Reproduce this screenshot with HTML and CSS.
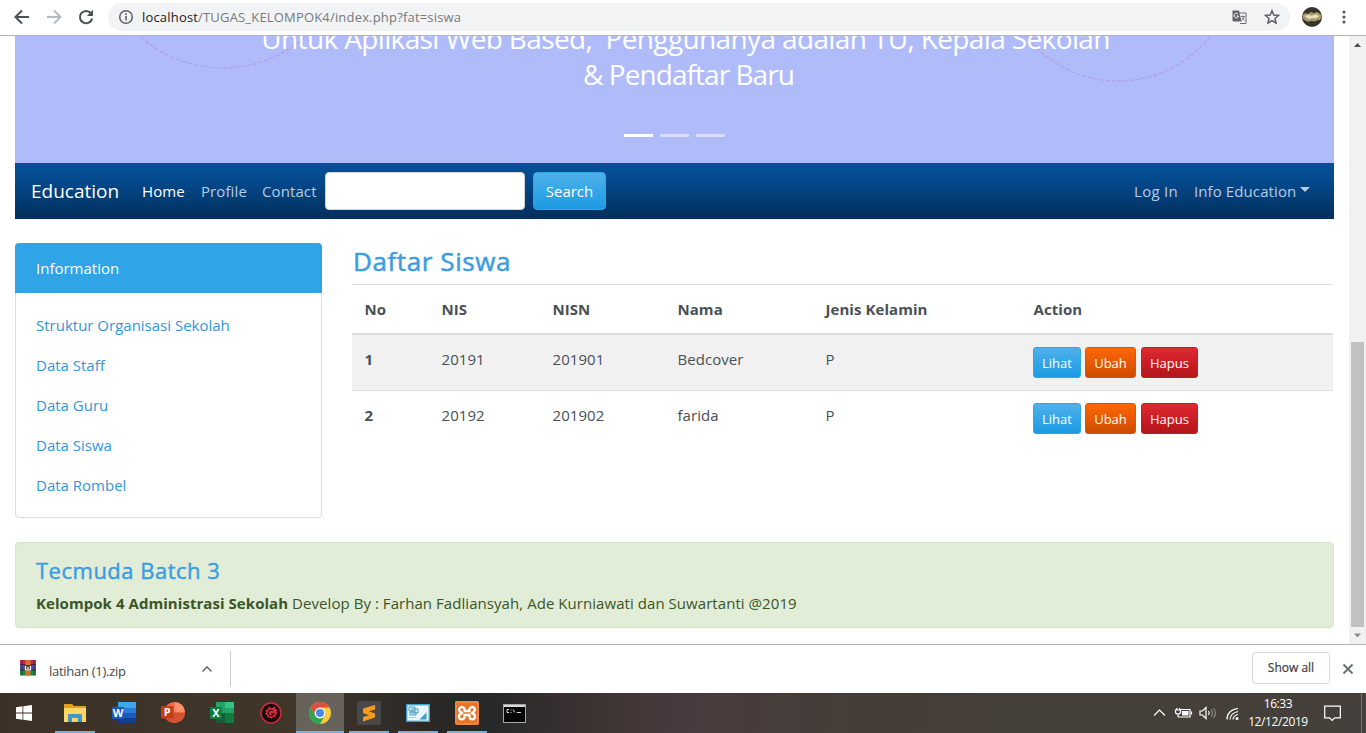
FILE: index.html
```html
<!DOCTYPE html>
<html lang="id">
<head>
<meta charset="utf-8">
<title>Education</title>
<link rel="stylesheet" href="styles.css">
</head>
<body>
<div class="screen">
  <header class="toolbar">
    <svg class="nav-icons" width="100" height="34" viewBox="0 0 100 34" fill="none" stroke-width="2">
      <path d="M29 17H16.500M22 10.500L15.500 17l6.500 6.500" stroke="#4c4f53"/>
      <path d="M47 17h12.500M54 10.500l6.500 6.500-6.500 6.500" stroke="#b9bbbe"/>
      <path d="M91 13.200A6.200 6.200 0 1 0 92.200 18.500" stroke="#4c4f53"/>
      <path d="M93 9.800v6.200h-6.200z" fill="#4c4f53"/>
    </svg>
    <div class="omnibox">
      <svg width="16" height="16" viewBox="0 0 16 16"><circle cx="8" cy="8" r="6.300" fill="none" stroke="#5f6368" stroke-width="1.500"/><path d="M7.200 7h1.600v4.500H7.200zM7.200 4.300h1.600v1.600H7.200z" fill="#5f6368"/></svg>
      <span class="url"><b>localhost</b>/TUGAS_KELOMPOK4/index.php?fat=siswa</span>
      <svg class="translate" width="15" height="15" viewBox="0 0 15 15"><path d="M6 3h8v10.500H8" fill="#f1f3f4" stroke="#6b6e72"/><path d="M0.500 0.500h6.500l2.500 11h-8a1 1 0 0 1-1-1z" fill="#5f6368"/><path d="M6.200 4.200A2.300 2.300 0 1 0 6.600 6H4.600" fill="none" stroke="#fff"/><path d="M9 6.500h4M11 5.500v1M12.300 6.500c-.5 2-1.500 3-2.800 4M10 7.500c.8 1.500 1.600 2.200 2.600 3" fill="none" stroke="#6b6e72" stroke-width=".9"/></svg>
      <svg width="16" height="16" viewBox="0 0 16 16"><path d="M8 1.700l1.800 4.300 4.700.4-3.500 3.100 1.050 4.500L8 11.600 3.950 14 5 9.500 1.500 6.400 6.200 6z" fill="none" stroke="#55585c" stroke-width="1.400"/></svg>
    </div>
    <svg class="avatar" width="20" height="20" viewBox="0 0 20 20"><circle cx="10" cy="10" r="10" fill="#35332c"/><path d="M.5 8l3-2 2.300 1 3-2 3 1.200 3-1.200 3.700 2 1.200 3-1.700 3-3 .2-2 1.300-4-.6-3 .8-3-1.200-2-2z" fill="#a99a68"/><path d="M2.500 9l4-1.300 3 1 4-1.500 4 1.800-3.500 2.500-4-.5-3 1.200z" fill="#e5dfbd"/></svg>
    <svg width="4" height="16" viewBox="0 0 4 16" fill="#55585c"><circle cx="2" cy="3" r="1.600"/><circle cx="2" cy="8" r="1.600"/><circle cx="2" cy="13" r="1.600"/></svg>
  </header>

  <div class="viewport">
    <main class="page">
      <section class="banner">
        <svg class="rings" width="1319" height="127" viewBox="15 36 1319 127" fill="none" stroke="#b39de9" stroke-width="1.200" stroke-dasharray="4 2"><circle cx="223" cy="-57" r="125"/><circle cx="1118" cy="-36" r="117"/></svg>
        <p class="caption"><span class="cap-one">Untuk Aplikasi Web Based,&nbsp; Penggunanya adalah TU, Kepala Sekolah</span><span class="cap-two">&amp; Pendaftar Baru</span></p>
        <div class="indicators"><i class="on"></i><i></i><i></i></div>
      </section>

      <nav class="navbar">
        <a class="brand">Education</a>
        <a class="link active">Home</a>
        <a class="link">Profile</a>
        <a class="link contact">Contact</a>
        <input class="field" aria-label="Search">
        <button class="btn search">Search</button>
        <a class="link login">Log In</a>
        <a class="link info">Info Education</a><i class="caret"></i>
      </nav>

      <div class="columns">
        <aside class="card">
          <div class="card-head">Information</div>
          <ul class="menu">
            <li>Struktur Organisasi Sekolah</li>
            <li>Data Staff</li>
            <li>Data Guru</li>
            <li>Data Siswa</li>
            <li>Data Rombel</li>
          </ul>
        </aside>
        <section class="content">
          <h2 class="title">Daftar Siswa</h2>
          <table class="table">
            <colgroup><col class="c1"><col class="c2"><col class="c3"><col class="c4"><col class="c5"><col></colgroup>
            <thead><tr><th>No</th><th>NIS</th><th>NISN</th><th>Nama</th><th>Jenis Kelamin</th><th>Action</th></tr></thead>
            <tbody>
              <tr class="odd"><th>1</th><td>20191</td><td>201901</td><td>Bedcover</td><td>P</td><td><div class="actions"><button class="btn sm lihat">Lihat</button><button class="btn sm ubah">Ubah</button><button class="btn sm hapus">Hapus</button></div></td></tr>
              <tr><th>2</th><td>20192</td><td>201902</td><td>farida</td><td>P</td><td><div class="actions"><button class="btn sm lihat">Lihat</button><button class="btn sm ubah">Ubah</button><button class="btn sm hapus">Hapus</button></div></td></tr>
            </tbody>
          </table>
        </section>
      </div>

      <footer class="notice">
        <h4 class="notice-title">Tecmuda Batch 3</h4>
        <p class="notice-text"><strong>Kelompok 4 Administrasi Sekolah</strong> <span>Develop By : Farhan Fadliansyah, Ade Kurniawati dan Suwartanti @2019</span></p>
      </footer>
    </main>
    <div class="scrollbar">
      <svg width="17" height="17" viewBox="0 0 17 17"><path d="M5 11l3.500-4 3.500 4z" fill="#505050"/></svg>
      <div class="thumb"></div>
      <svg width="17" height="17" viewBox="0 0 17 17"><path d="M5 6.500l3.500 4 3.500-4z" fill="#8a8a8a"/></svg>
    </div>
  </div>

  <div class="downloads">
    <svg class="rar" width="16" height="16" viewBox="0 0 16 16"><path d="M0 0h16v5H0z" fill="#c32a45"/><path d="M0 5h16v5H0z" fill="#4a4fae"/><path d="M0 10h16v5.500H0z" fill="#158a3c"/><path d="M0 4.500h16M0 10h16" stroke="#222" stroke-width=".8"/><path d="M2 0v15.500M14 0v15.500" stroke="#402a3b" stroke-width=".7"/><path d="M5.500 0h5v15.500h-5z" fill="#d8702a"/><path d="M4.500 5h7v6h-7z" fill="#553e30"/><path d="M5.500 6v4h5V6M8 7v3" fill="none" stroke="#fff" stroke-width="1.200"/></svg>
    <span class="filename">latihan (1).zip</span>
    <svg class="chev" width="12" height="8" viewBox="0 0 12 8"><path d="M1.500 6.500L6 2l4.500 4.500" fill="none" stroke="#6f7276" stroke-width="1.600"/></svg>
    <i class="divider"></i>
    <button class="showall">Show all</button>
    <svg width="12" height="12" viewBox="0 0 12 12"><path d="M1.500 1.500l9 9M10.500 1.500l-9 9" stroke="#6a6d71" stroke-width="1.800"/></svg>
  </div>

  <div class="taskbar">
    <div class="task start"><svg width="16" height="16" viewBox="0 0 16 16" fill="#fff"><path d="M0 2.200l6.500-.9v6.300H0zM7.300 1.200L16 0v7.600H7.300zM0 8.400h6.500v6.300L0 13.800zM7.300 8.400H16V16l-8.700-1.200z"/></svg></div>
    <div class="task running explorer"><svg width="22" height="20" viewBox="0 0 22 20"><path d="M0 1h8l2 2h12v16H0z" fill="#e2a11d"/><path d="M0 5h22v14H0z" fill="#fbd667"/><path d="M4 12q0-1 1-1h12q1 0 1 1v7h-4v-4H8v4H4z" fill="#4096cf"/></svg></div>
    <div class="task"><svg width="24" height="22" viewBox="0 0 24 22"><rect x="6" width="18" height="21" rx="1" fill="#2b7cd3"/><path d="M6 0h18v6H6z" fill="#41a5ee"/><path d="M6 11h18v5H6z" fill="#185abd"/><path d="M6 16h18v5H6z" fill="#103f91"/><rect y="5" width="12" height="12" rx="1" fill="#185abd"/><text x="6" y="14.500" class="glyph">W</text></svg></div>
    <div class="task"><svg width="24" height="22" viewBox="0 0 24 22"><circle cx="13.500" cy="10.500" r="10.500" fill="#ed6c47"/><path d="M13.500 0A10.500 10.500 0 0 1 24 10.500H13.500z" fill="#ff8f6b"/><path d="M3 10.500h21a10.500 10.500 0 0 1-21 0" fill="#d35230"/><rect y="4" width="12.500" height="12.500" rx="1" fill="#c43e1c"/><text x="6.200" y="14" class="glyph">P</text></svg></div>
    <div class="task"><svg width="24" height="22" viewBox="0 0 24 22"><rect x="6" width="18" height="21" rx="1" fill="#21a366"/><path d="M15 0h9v6h-9z" fill="#33c481"/><path d="M6 11h9v10H6z" fill="#185c37"/><path d="M15 11h9v10h-9z" fill="#107c41"/><rect y="5" width="12" height="12" rx="1" fill="#107c41"/><text x="6" y="14.500" class="glyph">X</text></svg></div>
    <div class="task"><svg width="22" height="22" viewBox="0 0 22 22"><circle cx="11" cy="11" r="10" fill="#17080a" stroke="#d22a3e" stroke-width="1.500"/><path d="M10 5l1 1.200L15.500 4.500l-.2 2.500 2.200.8-1.200 2 1.200 2-2 1v2l-2.300.2-1.700 1.800-1.700-1.500-2.300.2-.2-2.300L4.800 12l1.500-1.800L5 8l2.400-.2L8 5.700z" fill="#d22d40"/><path d="M13 8.500L9.800 8 8 10.800l1.500 2.700 3 .2 1.300-2.200H11" fill="none" stroke="#17080a" stroke-width="1.100"/></svg></div>
    <div class="task current"><svg width="22" height="22" viewBox="0 0 22 22"><circle cx="11" cy="11" r="11" fill="#f9cb3f"/><path d="M1.470 5.500A11 11 0 0 1 20.530 5.500H11a5.500 5.500 0 0 0-4.760 8.250z" fill="#de4b3f"/><path d="M1.470 5.500A11 11 0 0 0 11 22l4.760-8.250A5.500 5.500 0 0 1 6.240 13.750z" fill="#2ba552"/><circle cx="11" cy="11" r="5.200" fill="#fff"/><circle cx="11" cy="11" r="4" fill="#4b86ed"/></svg></div>
    <div class="task running"><svg width="24" height="24" viewBox="0 0 24 24"><rect width="24" height="24" rx="2" fill="#484848"/><path d="M6 7.500L18 4v4.500l-6 1.800 6 2.200v4L6 20.500V16l6-1.800-6-2.200z" fill="#f79a1c"/></svg></div>
    <div class="task running"><svg width="24" height="18" viewBox="0 0 24 18"><rect x=".7" y=".7" width="22.600" height="16.600" fill="#e9f5fb" stroke="#3ea2cf" stroke-width="1.400"/><path d="M3 3h6v4H3zM6 5h6v4H6zM4 8h6v3H4z" fill="#d5edf8" stroke="#4196be" stroke-width=".9"/><path d="M13.500 15.500l7-7v7z" fill="#3a9fbd"/><path d="M3 13.500h7" stroke="#a5cfdf"/></svg></div>
    <div class="task running"><svg width="24" height="24" viewBox="0 0 24 24"><rect width="24" height="24" rx="2" fill="#e87527"/><rect x="1" y="1" width="22" height="22" fill="none" stroke="#f3a064" stroke-width=".8"/><path d="M9.500 10V8A2.700 2.700 0 1 0 6 11.200L7.300 12 6 12.800A2.800 2.800 0 1 0 9.500 16v-2h5v2A2.800 2.800 0 1 0 18 12.800L16.700 12l1.300-.8A2.700 2.700 0 1 0 14.500 8v2z" fill="none" stroke="#fff" stroke-width="2.300" stroke-linejoin="round"/></svg></div>
    <div class="task"><svg width="23" height="19" viewBox="0 0 23 19"><rect x=".5" y=".5" width="22" height="18" fill="#050505" stroke="#a6a6a6"/><path d="M1 1h21v2H1z" fill="#d9d9d9"/><path d="M6 5.500H4v3h2M8 5.500v1M8 8v1M10 5.500l2 3M14 8.500h4" stroke="#ddd" fill="none"/></svg></div>
    <div class="tray">
      <svg width="94" height="20" viewBox="0 0 94 20" fill="none" stroke="#fff" stroke-width="1.200"><path d="M1 12.500l5.500-5.500 5.500 5.500"/><path d="M27 6.500h10v7.500H25M38.500 8.500v3"/><path d="M29 8h6.500v4.500H29z" fill="#fff" stroke="none"/><path d="M22.500 7h5v2q0 2-2.500 2t-2.500-2zM23.700 5v2M26.500 5v2M25 11v3"/><path d="M47 8h2.500l3.500-3.500v11L49.500 12H47zM55.500 8q1.500 2 0 4"/><path d="M58 6.500q3 3.500 0 7M60.500 5q4 5 0 10" stroke="#8d8a86"/><path d="M74 16.500Q74 7 85 5.500M77 16.500Q77.500 10 85 8.500M80 16.500Q80.500 12.500 85 11.500"/><circle cx="84" cy="15.500" r="1.500" fill="#fff" stroke="none"/></svg>
      <div class="clock"><span>16:33</span><span>12/12/2019</span></div>
      <svg width="17" height="17" viewBox="0 0 17 17"><path d="M.7 1.200h15.600v11.600h-5.500L8.200 15.500l-2.600-2.700H.7z" fill="none" stroke="#fff" stroke-width="1.200"/></svg>
      <i class="peek"></i>
    </div>
  </div>
</div>
</body>
</html>
```
FILE: styles.css
```css
* { box-sizing: border-box; }
body { margin: 0; background: #fff; font-family: "Open Sans", "Noto Sans", sans-serif; font-size: 15px; color: #495057; overflow: hidden; }
p, h2, h4, ul { margin: 0; padding: 0; }
button { font-family: inherit; }
svg { display: block; flex: none; }
.screen { width: 1366px; height: 733px; display: flex; flex-direction: column; }

.toolbar { height: 36px; flex: none; display: flex; align-items: center; padding-bottom: 1px; border-bottom: 1px solid #b4b4b6; }
.nav-icons { margin-right: 8px; }
.omnibox { width: 1182px; height: 28px; flex: none; border-radius: 14px; background: #f1f3f4; display: flex; align-items: center; padding: 0 10px; }
.url { margin-left: 8px; font-size: 13px; line-height: 16px; letter-spacing: .18px; color: #777a7e; white-space: nowrap; }
.url b { font-weight: 400; color: #202124; }
.translate { margin-left: auto; margin-right: 17px; }
.avatar { margin: 0 20px 0 12px; }

.viewport { height: 608px; flex: none; display: flex; }
.page { width: 1349px; padding: 0 15px; }
.banner { position: relative; height: 127px; background: #b0bbfa; overflow: hidden; display: flex; flex-direction: column; align-items: center; }
.rings { position: absolute; left: 0; top: 0; }
.caption { position: relative; margin-top: -16px; color: #fff; font-size: 28px; line-height: 36px; white-space: nowrap; display: flex; flex-direction: column; align-items: center; }
.cap-one { letter-spacing: -.63px; margin-left: 22px; }
.cap-two { letter-spacing: -.95px; margin-left: 28px; }
.indicators { display: flex; gap: 7px; margin-top: 42px; }
.indicators i { width: 29px; height: 3px; background: #fff; opacity: .5; }
.indicators .on { opacity: 1; }

.navbar { height: 56px; display: flex; align-items: center; padding: 0 24px 0 16px; background: linear-gradient(#04519b, #044687 40%, #032f5b); color: #fff; white-space: nowrap; }
.brand { width: 111px; font-size: 19px; }
.link { color: #b6cce2; letter-spacing: .1px; }
.active { width: 59px; }
.link.active { color: #fff; }
.active + .link { width: 61px; }
.contact { width: 63px; }
.field { width: 200px; height: 38px; border: 1px solid #ced4da; border-radius: 4px; background: #fff; padding: 0 12px; }
.btn { border: 1px solid transparent; border-radius: 4px; color: #fff; padding: 0; font-size: 15px; }
.search { width: 73px; height: 38px; margin-left: 8px; }
.search, .lihat { background: linear-gradient(#4fb1ea, #2fa4e7 60%, #1d9ae2); border-color: #2fa4e7; }
.login { margin-left: auto; width: 60px; letter-spacing: .3px; }
.info { width: 103px; }
.caret { margin-left: 3px; margin-top: -3px; border: 5px solid transparent; border-top-color: #b6cce2; border-bottom: 0; }

.columns { display: flex; gap: 30px; margin-top: 24px; }
.card { width: 307px; height: 275px; border: 1px solid #dcdee0; border-radius: 4px; }
.card-head { margin: -1px -1px 0; height: 50px; padding-left: 21px; line-height: 50px; border-radius: 4px 4px 0 0; background: #2fa4e7; color: #fff; }
.menu { list-style: none; padding: 12px 20px; color: #3396dc; }
.menu li { height: 40px; line-height: 40px; }
.content { width: 981px; }
.title { height: 41px; padding-left: 1px; line-height: 37px; font-size: 26px; font-weight: 400; letter-spacing: .6px; -webkit-text-stroke: .5px #3a9de2; color: #3a9de2; }
.table { width: 981px; table-layout: fixed; border-collapse: separate; border-spacing: 0; letter-spacing: .06px; }
.c1 { width: 77px; } .c2 { width: 111px; } .c3 { width: 125px; } .c4 { width: 148px; } .c5 { width: 208px; }
th, td { height: 56px; padding: 12px 12px 0 12.500px; line-height: 24px; text-align: left; vertical-align: top; border-top: 1px solid #dee2e6; }
td:last-child { padding-left: 12px; }
thead th { height: 51px; border-bottom: 2px solid #dcdee0; }
tbody tr:first-child > * { border-top: 0; height: 55px; }
.odd > * { background: #f1f1f1; }
.actions { display: flex; }
.sm { height: 31px; font-size: 13px; border-radius: 3px; }
.lihat { width: 48px; margin-right: 4px; }
.ubah { width: 51px; margin-right: 5px; background: linear-gradient(#fd6706, #e25600 60%, #c94c00); border-color: #dd5600; }
.hapus { width: 57px; background: linear-gradient(#dd2932, #c71c22 60%, #b0171c); border-color: #c71c22; }

.notice { margin-top: 24px; height: 86px; padding: 10px 20px; border: 1px solid #d3e6c3; border-radius: 4px; background: #e1edd7; }
.notice-title { height: 37px; line-height: 34px; font-size: 22px; font-weight: 400; letter-spacing: .5px; -webkit-text-stroke: .45px #3a9de2; color: #3a9de2; }
.notice-text { line-height: 26px; letter-spacing: .055px; color: #3b5526; white-space: nowrap; }

.scrollbar { width: 17px; background: #f1f1f1; display: flex; flex-direction: column; align-items: center; justify-content: space-between; }
.thumb { width: 13px; height: 285px; margin-top: auto; background: #c1c1c1; }

.downloads { height: 49px; flex: none; display: flex; align-items: center; padding: 0 12px 0 20px; border-top: 1px solid #b4b4b6; }
.rar { margin-bottom: 2px; }
.filename { width: 152px; margin: 4px 0 0 13px; font-size: 13px; letter-spacing: -.27px; color: #45484b; }
.divider { width: 1px; height: 36px; margin-left: 17px; background: #c9cbcd; }
.showall { width: 78px; height: 32px; margin: -2px 12px 0 auto; padding: 0 0 1px; border: 1px solid #d4d7da; border-radius: 4px; background: #fff; font-size: 12px; -webkit-text-stroke: .2px #3c4043; color: #3c4043; }

.taskbar { height: 40px; flex: none; display: flex; background: linear-gradient(90deg, #3b3126 0, #40362a 22%, #292827 32%, #272829 36%, #3c3231 43%, #493b3d 50%, #443e37 65%, #45403b 100%); }
.task { width: 49px; height: 40px; display: flex; align-items: center; justify-content: center; }
.start { width: 48px; margin-right: 2px; }
.running { width: 40px; margin: 0 5px 0 4px; box-shadow: inset 0 -2px #76b0e0; }
.explorer { margin: 0 4px 0 5px; }
.current { width: 48px; margin: 0 1px; background: #67625a; box-shadow: inset 0 -2px #76b0e0; }
.running:nth-last-child(3) { margin-right: 3px; }
.glyph { font: bold 11px "Open Sans", sans-serif; fill: #fff; text-anchor: middle; }
.tray { margin-left: auto; display: flex; align-items: center; color: #fff; font-size: 12px; letter-spacing: -.4px; }
.clock { width: 66px; margin: 0 13px 0 -2px; display: flex; flex-direction: column; align-items: center; line-height: 18px; }
.peek { width: 1px; height: 40px; margin-left: 20px; margin-right: 4px; background: #77736e; }
```
